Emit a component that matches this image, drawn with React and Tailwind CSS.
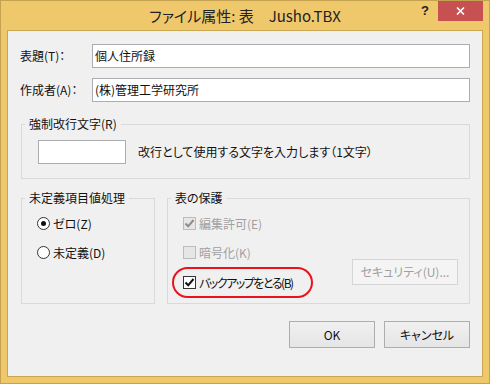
import React from 'react';

const CheckMark = ({ color }) => (
  <svg width="11" height="11" viewBox="0 0 11 11">
    <path d="M1.5 5.5 L4.2 8.3 L9.5 2" fill="none" stroke={color} strokeWidth="2" />
  </svg>
);

const Checkbox = ({ checked, disabled, label, tight }) => (
  <div className="flex items-center gap-[3px] h-[13px]">
    <span
      className={
        disabled
          ? 'w-[13px] h-[13px] border border-[#bcbcbc] bg-[#e6e6e6] flex items-center justify-center'
          : 'w-[13px] h-[13px] border border-[#333333] bg-white flex items-center justify-center'
      }
    >
      {checked && <CheckMark color={disabled ? '#8d8d8d' : '#111111'} />}
    </span>
    <span className={(disabled ? 'text-[#a0a0a0]' : 'text-[#111]') + (tight ? ' tracking-[-1.5px]' : '')}>{label}</span>
  </div>
);

const Radio = ({ checked, label }) => (
  <div className="flex items-center gap-[3px] h-[13px]">
    <span
      className={
        checked
          ? 'w-[13px] h-[13px] rounded-full border-[1.5px] border-[#333333] bg-white flex items-center justify-center'
          : 'w-[13px] h-[13px] rounded-full border border-[#333333] bg-white'
      }
    >
      {checked && <span className="w-[5px] h-[5px] rounded-full bg-[#111]" />}
    </span>
    <span>{label}</span>
  </div>
);

// fieldset keeps the legend on the border; padding goes on the inner div
const Group = ({ title, className, inner, children }) => (
  <fieldset className={'border border-[#d9d9d9] ' + className}>
    <legend className="ml-[3px] px-[4px] leading-[16px]">{title}</legend>
    <div className={inner}>{children}</div>
  </fieldset>
);

const Button = ({ children, disabled, className }) => (
  <div
    className={
      'flex items-center justify-center border ' +
      (disabled
        ? 'border-[#d5d5d5] bg-[#f4f4f4] text-[#a0a0a0] '
        : 'border-[#adadad] bg-gradient-to-b from-[#f0f0f0] to-[#e5e5e5] text-[#111] ') +
      className
    }
  >
    {children}
  </div>
);

export default function App() {
  return (
    <div className="w-[490px] h-[384px] border border-[#c4a252] bg-[#f0c86c] flex flex-col font-['Noto_Sans_CJK_JP',sans-serif] [font-feature-settings:'palt'] text-[12px] text-[#111]">
      {/* title bar */}
      <div className="relative h-[29px] shrink-0 flex items-center justify-center">
        <span className="text-[15px] leading-none text-[#222]">ファイル属性: 表　Jusho.TBX</span>
        <div className="absolute right-[6px] top-0 flex">
          <div className="w-[26px] h-[20px] flex items-center justify-center font-['Liberation_Sans',sans-serif] font-bold text-[13px] text-[#222]">
            ?
          </div>
          <div className="w-[45px] h-[20px] bg-[#c75050] flex items-center justify-center">
            <svg width="9" height="8" viewBox="0 0 9 8">
              <path d="M1 0.5 L8 7.5 M8 0.5 L1 7.5" stroke="#fff" strokeWidth="1.6" />
            </svg>
          </div>
        </div>
      </div>

      {/* client area */}
      <div className="mx-[6px] mb-[6px] flex-1 border border-[#c9a651] bg-[#f0f0f0] px-[12px] pt-[13px] flex flex-col">
        <div className="flex items-center h-[24px]">
          <span className="w-[72px]">表題(T)：</span>
          <div className="flex-1 h-[24px] border border-[#abadb3] bg-white px-[2px] flex items-center">個人住所録</div>
        </div>
        <div className="flex items-center h-[24px] mt-[10px]">
          <span className="w-[72px]">作成者(A)：</span>
          <div className="flex-1 h-[24px] border border-[#abadb3] bg-white px-[2px] flex items-center">(株)管理工学研究所</div>
        </div>

        <Group title="強制改行文字(R)" className="ml-[1px] mt-[14px]" inner="pl-[16px] pt-[8px] pb-[14px]">
          <div className="flex items-center gap-[12px]">
            <div className="w-[88px] h-[24px] border border-[#abadb3] bg-white" />
            <span>改行として使用する文字を入力します（1文字）</span>
          </div>
        </Group>

        <div className="flex gap-[12px] ml-[1px] mt-[11px] h-[114px]">
          <Group title="未定義項目値処理" className="w-[134px]" inner="pl-[15px] pt-[11px]">
            <div className="flex flex-col gap-[16px]">
              <Radio checked label="ゼロ(Z)" />
              <Radio label="未定義(D)" />
            </div>
          </Group>
          <Group title="表の保護" className="flex-1" inner="pl-[15px] pt-[11px]">
            <Checkbox checked disabled label="編集許可(E)" />
            <div className="flex items-end mt-[16px]">
              <div className="flex-1 flex flex-col gap-[17px]">
                <Checkbox disabled label="暗号化(K)" />
                <div className="relative">
                  <Checkbox checked tight label="バックアップをとる(B)" />
                  <div className="absolute left-[-11px] top-[-9px] w-[141px] h-[31px] rounded-full border-2 border-[#e8141c]" />
                </div>
              </div>
              <Button disabled className="w-[106px] h-[26px] mr-[11px] mb-[4px]">セキュリティ(U)...</Button>
            </div>
          </Group>
        </div>

        <div className="flex justify-end gap-[9px] mt-[17px]">
          <Button className="w-[86px] h-[27px]">OK</Button>
          <Button className="w-[86px] h-[27px]">キャンセル</Button>
        </div>
      </div>
    </div>
  );
}
